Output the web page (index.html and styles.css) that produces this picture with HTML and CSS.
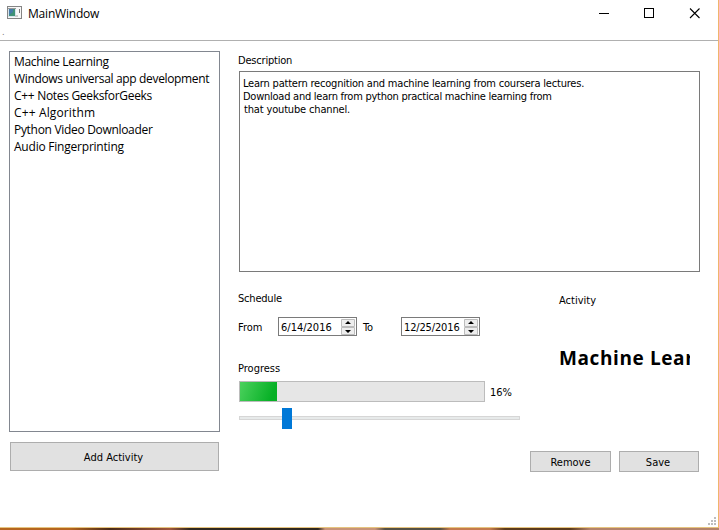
FILE: index.html
```html
<!DOCTYPE html>
<html lang="en">
<head>
<meta charset="utf-8">
<title>MainWindow</title>
<link rel="stylesheet" href="styles.css">
</head>
<body>
<div class="window">
  <header class="titlebar">
    <svg class="app-icon" width="16" height="14" viewBox="0 0 16 14">
      <rect x="0.5" y="0.5" width="14" height="12" fill="#f8f8f8" stroke="#858585"/>
      <rect x="1" y="2" width="8" height="9" fill="#d5e4ec"/>
      <path d="M1 2.500h8" stroke="#999"/>
      <rect x="2" y="3" width="6" height="7" fill="#3f9277"/>
      <path d="M2 3h4v3L2 9z" fill="#477baa"/>
      <path d="M12.500 3v4" stroke="#777"/>
      <path d="M8 9h3v2H8z" fill="#ccc"/>
    </svg>
    <h1 class="title"><span>MainWindow</span></h1>
    <svg class="controls" width="104" height="12" viewBox="0 0 104 12" fill="none" stroke="#000">
      <path d="M0 5.500h10"/>
      <rect x="45.500" y="0.500" width="9" height="9"/>
      <path d="M91 .5l9.500 9.500M100.500 .5L91 10" stroke-width="1.1"/>
    </svg>
  </header>
  <div class="menubar">.</div>
  <main class="content">
    <section class="sidebar">
      <ul class="list">
        <li><span class="l1">Machine Learning</span></li>
        <li><span class="l2">Windows universal app development</span></li>
        <li><span class="l3">C++ Notes GeeksforGeeks</span></li>
        <li><span class="l4">C++ Algorithm</span></li>
        <li><span class="l5">Python Video Downloader</span></li>
        <li><span class="l6">Audio Fingerprinting</span></li>
      </ul>
      <button class="button add"><span>Add Activity</span></button>
    </section>
    <section class="details">
      <div class="label">Description</div>
      <div class="description">
        <p class="d1">Learn pattern recognition and machine learning from coursera lectures.</p>
        <p class="d2">Download and learn from python practical machine learning from</p>
        <p class="d3">that youtube channel.</p>
      </div>
      <div class="lower">
        <div class="schedule">
          <div class="label">Schedule</div>
          <div class="dates">
            <span class="from">From</span>
            <div class="date"><span>6/14/2016</span>
              <svg width="15" height="16" viewBox="0 0 15 16"><path d="M.5.5h13v7H.5zM.5 8.500h13v7H.5z" fill="#eee" stroke="#bcbcbc"/><path d="M7 2l3 3H4zM4 11h6l-3 3z" fill="#000"/></svg>
            </div>
            <span class="to">To</span>
            <div class="date"><span>12/25/2016</span>
              <svg width="15" height="16" viewBox="0 0 15 16"><path d="M.5.5h13v7H.5zM.5 8.500h13v7H.5z" fill="#eee" stroke="#bcbcbc"/><path d="M7 2l3 3H4zM4 11h6l-3 3z" fill="#000"/></svg>
            </div>
          </div>
          <div class="label progress-label">Progress</div>
          <div class="progress-row">
            <div class="progress"><div class="fill"></div></div>
            <span class="percent">16%</span>
          </div>
          <div class="slider"><div class="groove"></div><div class="handle"></div></div>
        </div>
        <div class="activity">
          <div class="activity-label">Activity</div>
          <h2><span>Machine Lear</span></h2>
        </div>
      </div>
      <div class="actions">
        <button class="button"><span>Remove</span></button>
        <button class="button save"><span>Save</span></button>
      </div>
    </section>
  </main>
  <svg class="grip" width="8" height="8" viewBox="0 0 8 8" fill="#bdbdbd"><path d="M6 0h2v2H6zM3 3h2v2H3zM6 3h2v2H6zM0 6h2v2H0zM3 6h2v2H3zM6 6h2v2H6z"/></svg>
</div>
<div class="desktop"></div>
</body>
</html>
```
FILE: styles.css
```css
* { box-sizing: border-box; margin: 0; padding: 0; }
body {
  width: 719px; height: 530px; overflow: hidden; background: #fff; color: #000;
  font: 11px/13px "DejaVu Sans Condensed", "DejaVu Sans", sans-serif;
  font-stretch: condensed; letter-spacing: -0.2px;
}
.window {
  position: relative; height: 528px;
  border-right: 1px solid #f0b56c; border-bottom: 1px solid #e6c47f;
}
.titlebar { height: 28px; display: flex; padding: 6px 0 0 7px; align-items: flex-start; }
.title { font: 12px/14px "Open Sans", sans-serif; letter-spacing: -0.2px; margin: 1px 0 0 5px; flex: 1; }
.controls { margin-right: 15px; margin-top: 2px; }
.menubar { height: 13px; border-bottom: 1px solid #b0b0b0; padding-left: 2px; color: #777; font-size: 9px; line-height: 9px; }
.content { display: grid; grid-template-columns: 211px 462px; column-gap: 18px; padding: 10px 0 0 9px; }
.list { list-style: none; height: 381px; border: 1px solid #828790; padding: 1px 4px; font: 12px/17px "Open Sans", sans-serif; white-space: nowrap; }
.l1, .l3, .l5 { letter-spacing: -0.31px; }
.l2 { letter-spacing: -0.34px; }
.l4 { letter-spacing: 0.13px; }
.l6 { letter-spacing: -0.22px; }
.button {
  display: block; width: 81px; height: 21px; border: 1px solid #adadad; background: #e1e1e1;
  font: inherit; color: #000; text-align: center; white-space: nowrap; padding-top: 1px;
}
.add { width: 209px; height: 29px; margin: 10px 0 0 1px; padding: 2px 2px 0 0; }
.details { padding-top: 3px; }
.label { height: 13px; }
.description { width: 461px; height: 201px; margin: 4px 0 0 1px; border: 1px solid #7a7a7a; padding: 5px 3px; white-space: nowrap; }
.description p { width: max-content; letter-spacing: -0.2px; }
.description .d2 { letter-spacing: -0.25px; }
.description .d3 { margin-left: 1px; letter-spacing: -0.16px; }
.lower { display: grid; grid-template-columns: 320px 132px; padding-top: 20px; height: 179px; }
.dates { display: flex; height: 19px; margin-top: 12px; align-items: center; }
.from { width: 40px; padding-top: 1px; letter-spacing: 0; }
.to { width: 38px; padding-top: 1px; }
.date { width: 79px; height: 19px; border: 1px solid #7a7a7a; display: flex; justify-content: space-between; align-items: center; padding-left: 2px; margin-right: 6px; white-space: nowrap; letter-spacing: 0; }
.date span { padding-top: 1px; }
.dates .to + .date { margin: 0; letter-spacing: -0.15px; }
.progress-label { margin-top: 26px; letter-spacing: 0; }
.progress-row { display: flex; margin-top: 6px; align-items: center; height: 21px; }
.progress { margin-left: 1px; width: 246px; height: 21px; border: 1px solid #bcbcbc; background: #e6e6e6; }
.fill { width: 37px; height: 19px; background: linear-gradient(110deg, #4bd15d, #06b025 85%); }
.percent { margin-left: 5px; padding-top: 1px; letter-spacing: 0; }
.slider { position: relative; margin: 6px 0 0 1px; height: 21px; padding-top: 8px; width: 281px; }
.groove { height: 4px; border: 1px solid #d6d6d6; background: #e7eaea; }
.handle { position: absolute; left: 43px; top: 0; width: 10px; height: 21px; background: #0078d7; }
.activity-label { margin: 2px 0 0 1px; letter-spacing: 0; }
h2 { margin: 39px 0 0 1px; width: 131px; overflow: hidden; white-space: nowrap; font: bold 19px/24px "Open Sans", sans-serif; letter-spacing: 0.6px; }
.actions { display: flex; justify-content: flex-end; gap: 8px; }
.save { width: 80px; padding-right: 2px; }
.details .actions { padding-right: 1px; letter-spacing: 0; }
.actions .button, .add { letter-spacing: 0; }
.grip { position: absolute; right: 2px; bottom: 2px; }
.desktop { height: 2px; background: linear-gradient(90deg, #b5651f 0 70px, #4a2a18 110px, #a0563c 170px, #302820 190px 318px, #c99478 325px 375px, #555045 385px 440px, #c57b4d 450px 490px, #5c3a1c 505px 570px, #b5836a 590px 719px); }
```
